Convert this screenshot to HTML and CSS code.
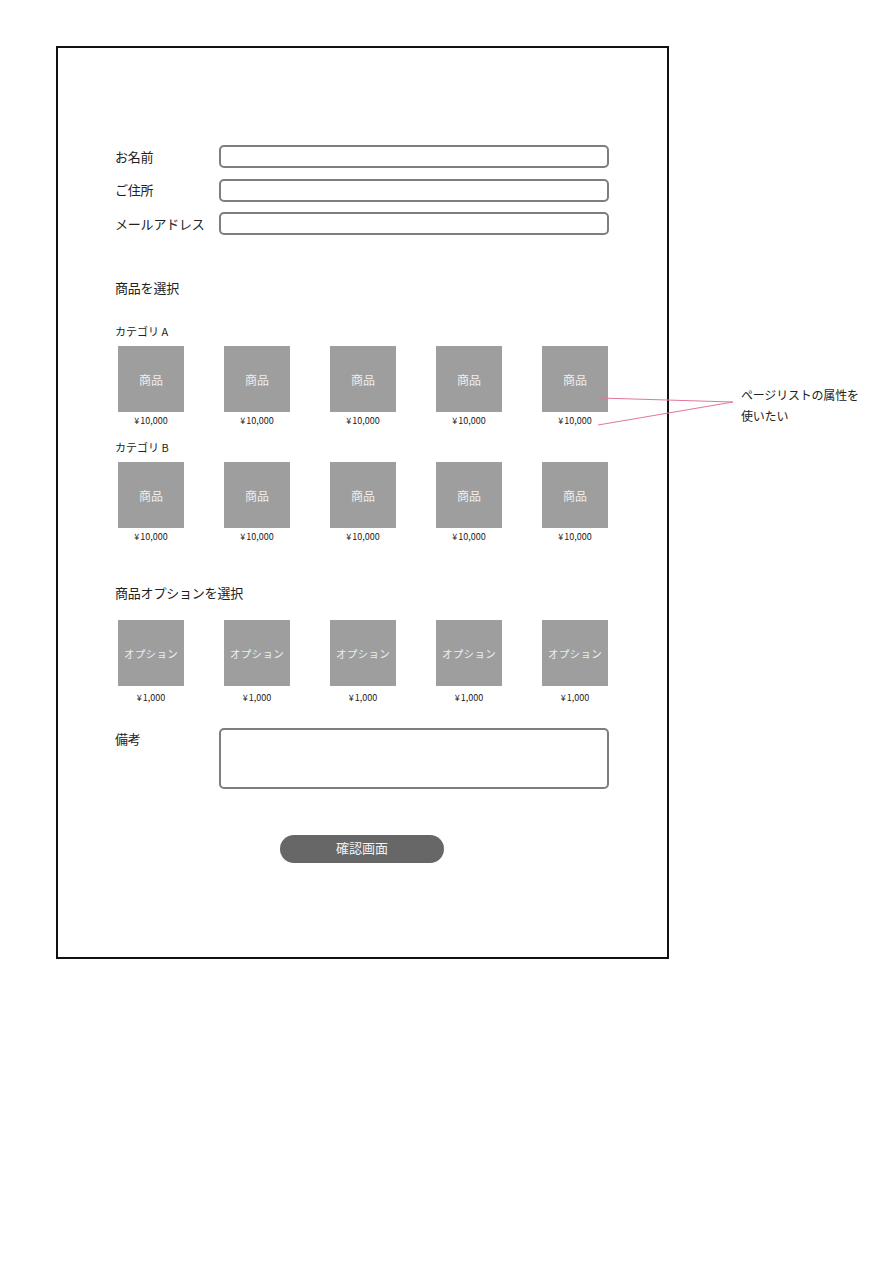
FILE: index.html
```html
<!DOCTYPE html>
<html lang="ja">

<head>
	<meta charset="UTF-8">
	<meta name="viewport" content="width=device-width, initial-scale=1.0">
	<link rel="stylesheet" href="styles.css">
	<title>注文フォーム</title>
</head>

<body>
	<div class="sheet">
		<!-- お客様情報 -->
		<div class="form-grid">
			<label class="label" for="name">お名前</label>
			<input class="field" type="text" id="name">
			<label class="label" for="address">ご住所</label>
			<input class="field" type="text" id="address">
			<label class="label" for="mail">メールアドレス</label>
			<input class="field" type="text" id="mail">
		</div>

		<h2 class="section-title">商品を選択</h2>

		<h3 class="category">カテゴリ A</h3>
		<ul class="items">
			<li class="item"><div class="thumb">商品</div><span class="price">¥ 10,000</span></li>
			<li class="item"><div class="thumb">商品</div><span class="price">¥ 10,000</span></li>
			<li class="item"><div class="thumb">商品</div><span class="price">¥ 10,000</span></li>
			<li class="item"><div class="thumb">商品</div><span class="price">¥ 10,000</span></li>
			<li class="item"><div class="thumb">商品</div><span class="price">¥ 10,000</span></li>
		</ul>

		<h3 class="category category-b">カテゴリ B</h3>
		<ul class="items">
			<li class="item"><div class="thumb">商品</div><span class="price">¥ 10,000</span></li>
			<li class="item"><div class="thumb">商品</div><span class="price">¥ 10,000</span></li>
			<li class="item"><div class="thumb">商品</div><span class="price">¥ 10,000</span></li>
			<li class="item"><div class="thumb">商品</div><span class="price">¥ 10,000</span></li>
			<li class="item"><div class="thumb">商品</div><span class="price">¥ 10,000</span></li>
		</ul>

		<h2 class="section-title options-title">商品オプションを選択</h2>
		<ul class="items options">
			<li class="item"><div class="thumb thumb-option">オプション</div><span class="price">¥ 1,000</span></li>
			<li class="item"><div class="thumb thumb-option">オプション</div><span class="price">¥ 1,000</span></li>
			<li class="item"><div class="thumb thumb-option">オプション</div><span class="price">¥ 1,000</span></li>
			<li class="item"><div class="thumb thumb-option">オプション</div><span class="price">¥ 1,000</span></li>
			<li class="item"><div class="thumb thumb-option">オプション</div><span class="price">¥ 1,000</span></li>
		</ul>

		<div class="note-row">
			<label class="label note-label" for="note">備考</label>
			<textarea class="note" id="note"></textarea>
		</div>

		<button class="confirm-btn" type="button">確認画面</button>
	</div>

	<!-- メモ -->
	<svg class="memo-lines" width="140" height="34" viewBox="0 0 140 34">
		<line x1="2" y1="3" x2="135" y2="7" stroke="#e0779f" stroke-width="1.2" />
		<line x1="0" y1="30" x2="135" y2="7" stroke="#e0779f" stroke-width="1.2" />
	</svg>
	<p class="memo">ページリストの属性を<br>使いたい</p>
</body>

</html>
```

FILE: styles.css
```css
* {
	box-sizing: border-box;
}

body {
	margin: 0;
	position: relative;
	background: #fff;
	color: #222;
	font-family: "Noto Sans CJK JP", "Noto Sans", sans-serif;
}

.sheet {
	margin: 46px 0 0 56px;
	width: 613px;
	height: 913px;
	border: 2px solid #111;
	padding: 97px 58px 0 57px;
	display: flex;
	flex-direction: column;
}

/* お客様情報 */
.form-grid {
	display: grid;
	grid-template-columns: 104px 390px;
	grid-auto-rows: 23px;
	row-gap: 10.5px;
	align-items: center;
}

.label {
	font-size: 13px;
	line-height: 20px;
	letter-spacing: -0.2px;
}

.field {
	height: 23px;
	border: 2px solid #7e7e7e;
	border-radius: 5px;
	background: #fff;
}

.section-title {
	margin: 43px 0 0;
	font-size: 13px;
	line-height: 20px;
	font-weight: normal;
	letter-spacing: -0.2px;
}

.category {
	margin: 25px 0 0;
	font-size: 11px;
	line-height: 16px;
	font-weight: normal;
}

.category-b {
	margin-top: 12px;
}

.options-title {
	margin-top: 40px;
}

/* 商品リスト */
.items {
	list-style: none;
	margin: 7px 0 0 3px;
	padding: 0;
	display: grid;
	grid-template-columns: repeat(5, 66px);
	column-gap: 40px;
}

.item {
	display: flex;
	flex-direction: column;
	align-items: center;
}

.thumb {
	width: 66px;
	height: 66px;
	background: #9e9e9e;
	color: #eee;
	font-size: 12px;
	display: flex;
	align-items: center;
	justify-content: center;
}

.thumb-option {
	font-size: 10.5px;
	letter-spacing: 0.3px;
}

.price {
	margin-top: 3px;
	font-size: 9px;
	line-height: 12px;
	color: #222;
	word-spacing: -1px;
}

.options {
	margin-top: 17px;
}

.options .price {
	margin-top: 6px;
}

/* 備考 */
.note-row {
	margin-top: 24px;
	display: grid;
	grid-template-columns: 104px 390px;
	align-items: start;
}

.note-label {
	padding-top: 1px;
}

.note {
	height: 61px;
	border: 2px solid #7e7e7e;
	border-radius: 5px;
	resize: none;
}

.confirm-btn {
	margin: 46px auto 0;
	width: 164px;
	height: 28px;
	border: none;
	border-radius: 14px;
	background: #676767;
	color: #f2f2f2;
	font-family: inherit;
	font-size: 13px;
	padding: 0 0 3px;
}

/* メモ */
.memo-lines {
	position: absolute;
	left: 598px;
	top: 395px;
}

.memo {
	position: absolute;
	left: 741px;
	top: 384px;
	margin: 0;
	font-size: 12px;
	line-height: 21px;
	color: #222;
	letter-spacing: -0.2px;
}
```
